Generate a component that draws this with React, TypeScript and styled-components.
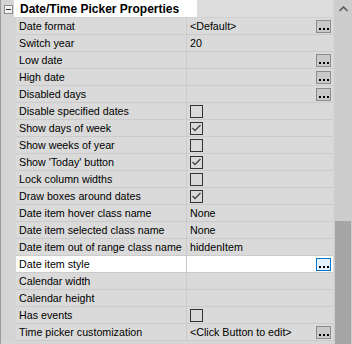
import React from "react";
import styled, { createGlobalStyle, css } from "styled-components";

const GlobalStyle = createGlobalStyle`
  html, body {
    margin: 0;
    padding: 0;
    background: #d6d6d6;
  }
  body {
    font-family: "Liberation Sans", Arial, sans-serif;
    font-size: 10.7px;
    color: #000;
  }
`;

const Panel = styled.div`
  display: flex;
  width: 352px;
  height: 344px;
  overflow: hidden;
  background: #d6d6d6;
`;

const Grid = styled.div`
  flex: 1;
  display: flex;
  flex-direction: column;
  border-left: 1px solid #9c9c9c;
`;

const HeaderRow = styled.div`
  display: grid;
  grid-template-columns: 13px 1fr;
  height: 18px;
`;

const Gutter = styled.div`
  display: flex;
  align-items: center;
  justify-content: center;
  background: #d4d4d4;
`;

const Toggle = styled.div`
  position: relative;
  width: 7px;
  height: 7px;
  border: 1px solid #8a8a8a;
  background: #f2f2f2;
  margin-left: 2px;

  &::after {
    content: "";
    position: absolute;
    left: 1px;
    top: 3px;
    width: 5px;
    height: 1px;
    background: #333;
  }
`;

const HeaderTitle = styled.div`
  display: flex;
  align-items: center;
  padding-left: 6px;
  font-size: 12px;
  font-weight: 700;
  background: linear-gradient(to right, #ffffff 0, #ffffff 183px, #dcdcdc 183px);
  border-bottom: 1px solid #d0d0d0;
`;

const Row = styled.div`
  display: grid;
  grid-template-columns: 15px 171px 1fr;
  height: 17px;
`;

const Cell = styled.div<{ $selected?: boolean }>`
  display: flex;
  align-items: center;
  height: 16px;
  border-bottom: 1px solid #cbcbcb;
  background: ${({ $selected }) => ($selected ? "#ffffff" : "#dadada")};
  white-space: nowrap;
  overflow: hidden;
`;

const NameCell = styled(Cell)`
  padding-left: 3px;
  border-right: 1px solid #cbcbcb;
`;

const ValueCell = styled(Cell)`
  justify-content: space-between;
  padding-left: 3px;
  padding-right: 2px;
`;

const EditButton = styled.div<{ $selected?: boolean }>`
  box-sizing: border-box;
  width: 15px;
  height: 13px;
  margin-left: auto;
  display: flex;
  align-items: flex-end;
  justify-content: center;
  gap: 2px;
  padding-bottom: 2px;
  border: 1px solid #8c8c8c;
  background: #c9c9c9;

  ${({ $selected }) =>
    $selected &&
    css`
      border-color: #0078d7;
      background: #e5f1fb;
    `}

  & > span {
    width: 2px;
    height: 2px;
    background: #000;
  }
`;

const Check = styled.div`
  box-sizing: border-box;
  width: 13px;
  height: 13px;
  border: 1px solid #333;
  display: flex;
  align-items: center;
  justify-content: center;
`;

const ScrollBar = styled.div`
  width: 18px;
  display: flex;
  flex-direction: column;
  background: #cdcdcd;
  border-left: 1px solid #d6d6d6;
`;

const ArrowBox = styled.div`
  height: 17px;
  display: flex;
  align-items: center;
  justify-content: center;
`;

const Thumb = styled.div`
  margin-top: auto;
  margin-left: 1px;
  margin-right: 1px;
  height: 123px;
  background: #a6a6a6;
`;

type Kind = "button" | "check" | "checked" | "text" | "none";

type Prop = {
  name: string;
  kind: Kind;
  value?: string;
  button?: boolean;
  selected?: boolean;
};

const props: Prop[] = [
  { name: "Date format", kind: "text", value: "<Default>", button: true },
  { name: "Switch year", kind: "text", value: "20" },
  { name: "Low date", kind: "none", button: true },
  { name: "High date", kind: "none", button: true },
  { name: "Disabled days", kind: "none", button: true },
  { name: "Disable specified dates", kind: "check" },
  { name: "Show days of week", kind: "checked" },
  { name: "Show weeks of year", kind: "check" },
  { name: "Show 'Today' button", kind: "checked" },
  { name: "Lock column widths", kind: "check" },
  { name: "Draw boxes around dates", kind: "checked" },
  { name: "Date item hover class name", kind: "text", value: "None" },
  { name: "Date item selected class name", kind: "text", value: "None" },
  { name: "Date item out of range class name", kind: "text", value: "hiddenItem" },
  { name: "Date item style", kind: "none", button: true, selected: true },
  { name: "Calendar width", kind: "none" },
  { name: "Calendar height", kind: "none" },
  { name: "Has events", kind: "check" },
  {
    name: "Time picker customization",
    kind: "text",
    value: "<Click Button to edit>",
    button: true,
  },
];

const CheckBox = ({ checked }: { checked?: boolean }) => (
  <Check>
    {checked && (
      <svg width="9" height="8" viewBox="0 0 9 8">
        <path d="M0.5 4 L3 6.5 L8.5 1" fill="none" stroke="#444" strokeWidth="1.3" />
      </svg>
    )}
  </Check>
);

const App = () => {
  return (
    <>
      <GlobalStyle />
      <Panel>
        <Grid>
          <HeaderRow>
            <Gutter>
              <Toggle />
            </Gutter>
            <HeaderTitle>Date/Time Picker Properties</HeaderTitle>
          </HeaderRow>
          {props.map((p) => (
            <Row key={p.name}>
              <Gutter />
              <NameCell $selected={p.selected}>{p.name}</NameCell>
              <ValueCell $selected={p.selected}>
                {p.kind === "text" && <span>{p.value}</span>}
                {p.kind === "check" && <CheckBox />}
                {p.kind === "checked" && <CheckBox checked />}
                {p.button && (
                  <EditButton $selected={p.selected}>
                    <span />
                    <span />
                    <span />
                  </EditButton>
                )}
              </ValueCell>
            </Row>
          ))}
        </Grid>
        <ScrollBar>
          <ArrowBox>
            <svg width="9" height="6" viewBox="0 0 9 6">
              <path d="M0.5 5 L4.5 1 L8.5 5" fill="none" stroke="#555" strokeWidth="1.5" />
            </svg>
          </ArrowBox>
          <Thumb />
        </ScrollBar>
      </Panel>
    </>
  );
};

export default App;
